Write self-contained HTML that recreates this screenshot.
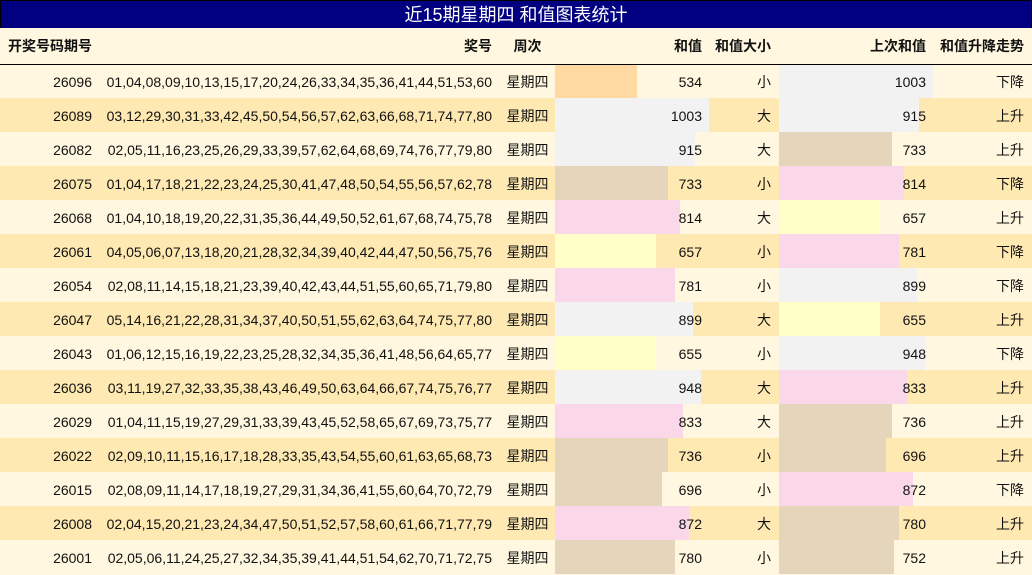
<!DOCTYPE html>
<html><head><meta charset="utf-8"><style>
body{margin:0;width:1032px;height:575px;overflow:hidden;background:#fff7df;font-family:"Liberation Sans","Noto Sans CJK SC",sans-serif;font-size:14px;color:#111}
.title{position:absolute;left:0;top:0;width:1030px;height:27px;background:#000080;border:1px solid #000;color:#fff;font-size:18px;text-align:center;line-height:29px}
table{position:absolute;left:0;top:28px;border-collapse:collapse;table-layout:fixed;width:1032px}
td,th{padding:0;white-space:nowrap;text-align:right;position:relative;box-sizing:border-box}
th{height:36px;font-weight:bold;border-bottom:1px solid #000;background:#fff7df;padding-top:1px}
td{height:34px;padding-top:2px}
tr.d td{background:#ffe9b2}
tr.l td{background:#fff7df}
.c1{padding-right:7px}.c2{padding-right:8px}.c3{text-align:center}
.c4{padding-right:7px}.c5{padding-right:8px}.c6{padding-right:7px}.c7{padding-right:8px}
.bar{position:absolute;left:0;top:0;height:34px}
.t{position:relative}
</style></head><body>
<div class="title">近15期星期四 和值图表统计</div>
<table>
<colgroup><col style="width:99px"><col style="width:401px"><col style="width:55px"><col style="width:154px"><col style="width:70px"><col style="width:154px"><col style="width:99px"></colgroup>
<tr><th class="c1">开奖号码期号</th><th class="c2">奖号</th><th class="c3">周次</th><th class="c4">和值</th><th class="c5">和值大小</th><th class="c6">上次和值</th><th class="c7">和值升降走势</th></tr>
<tbody id="b"></tbody>
</table>
<script>
var rows=[
["26096","01,04,08,09,10,13,15,17,20,24,26,33,34,35,36,41,44,51,53,60",534,"小",1003,"下降"],
["26089","03,12,29,30,31,33,42,45,50,54,56,57,62,63,66,68,71,74,77,80",1003,"大",915,"上升"],
["26082","02,05,11,16,23,25,26,29,33,39,57,62,64,68,69,74,76,77,79,80",915,"大",733,"上升"],
["26075","01,04,17,18,21,22,23,24,25,30,41,47,48,50,54,55,56,57,62,78",733,"小",814,"下降"],
["26068","01,04,10,18,19,20,22,31,35,36,44,49,50,52,61,67,68,74,75,78",814,"大",657,"上升"],
["26061","04,05,06,07,13,18,20,21,28,32,34,39,40,42,44,47,50,56,75,76",657,"小",781,"下降"],
["26054","02,08,11,14,15,18,21,23,39,40,42,43,44,51,55,60,65,71,79,80",781,"小",899,"下降"],
["26047","05,14,16,21,22,28,31,34,37,40,50,51,55,62,63,64,74,75,77,80",899,"大",655,"上升"],
["26043","01,06,12,15,16,19,22,23,25,28,32,34,35,36,41,48,56,64,65,77",655,"小",948,"下降"],
["26036","03,11,19,27,32,33,35,38,43,46,49,50,63,64,66,67,74,75,76,77",948,"大",833,"上升"],
["26029","01,04,11,15,19,27,29,31,33,39,43,45,52,58,65,67,69,73,75,77",833,"大",736,"上升"],
["26022","02,09,10,11,15,16,17,18,28,33,35,43,54,55,60,61,63,65,68,73",736,"小",696,"上升"],
["26015","02,08,09,11,14,17,18,19,27,29,31,34,36,41,55,60,64,70,72,79",696,"小",872,"下降"],
["26008","02,04,15,20,21,23,24,34,47,50,51,52,57,58,60,61,66,71,77,79",872,"大",780,"上升"],
["26001","02,05,06,11,24,25,27,32,34,35,39,41,44,51,54,62,70,71,72,75",780,"小",752,"上升"]];
function col(v){if(v==534)return"#ffd8a2";if([1003,915,899,948].indexOf(v)>=0)return"#f2f2f2";if([733,736,696,780,752].indexOf(v)>=0)return"#e5d6bb";if([814,781,833,872].indexOf(v)>=0)return"#fad8ea";return"#ffffc8";}
function bar(v){return '<div class="bar" style="width:'+Math.round(v/1003*154)+'px;background:'+col(v)+'"></div><span class="t">'+v+'</span>';}
var h="";rows.forEach(function(r,i){h+='<tr class="'+(i%2?'d':'l')+'"><td class="c1">'+r[0]+'</td><td class="c2">'+r[1]+'</td><td class="c3">星期四</td><td class="c4">'+bar(r[2])+'</td><td class="c5">'+r[3]+'</td><td class="c6">'+bar(r[4])+'</td><td class="c7">'+r[5]+'</td></tr>';});
document.getElementById("b").innerHTML=h;
</script>
</body></html>
